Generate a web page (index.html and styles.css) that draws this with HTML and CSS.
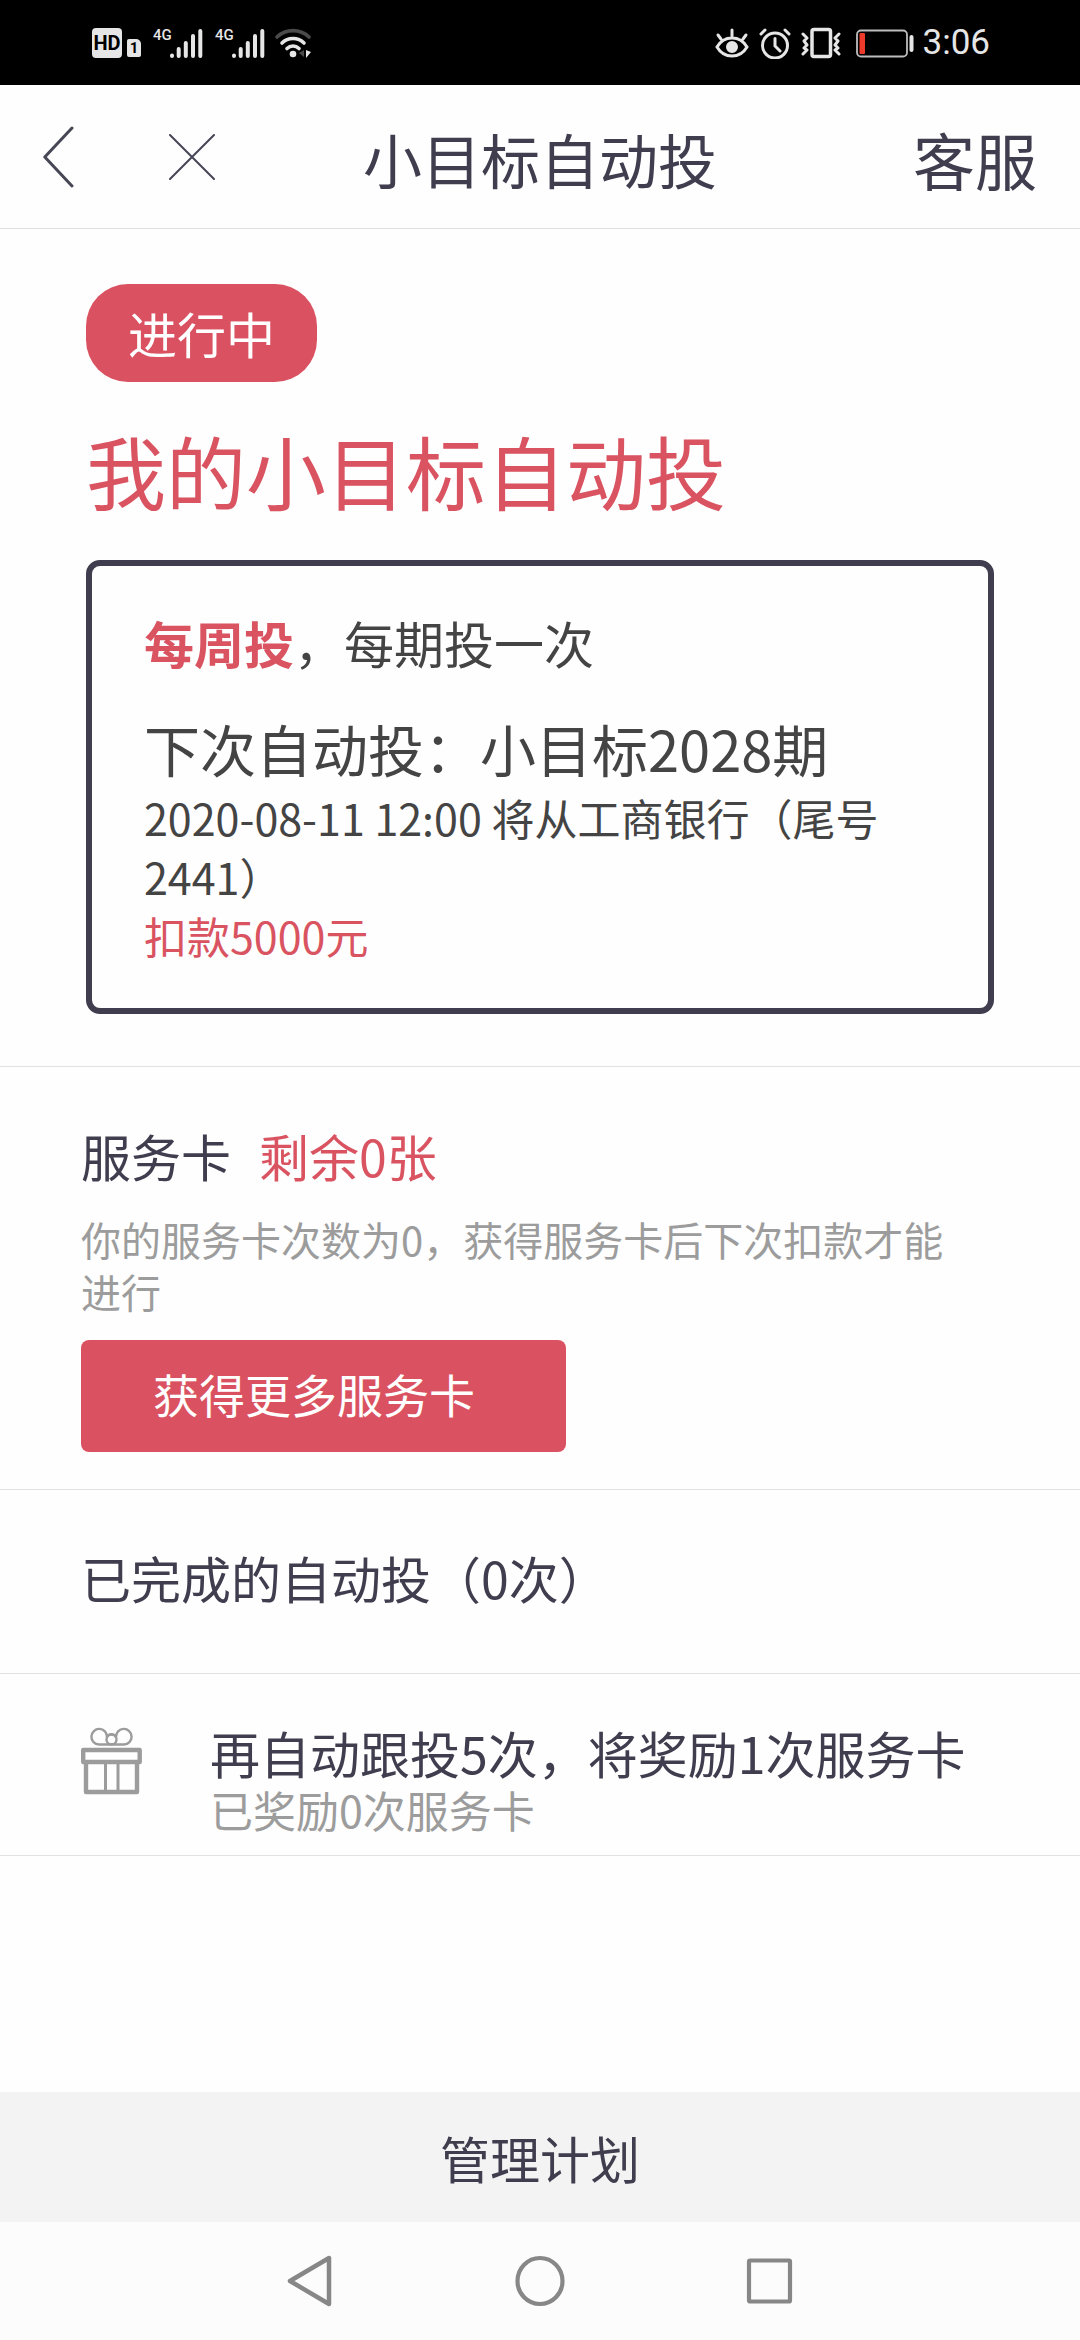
FILE: index.html
```html
<!DOCTYPE html>
<html lang="zh-CN">
<head>
<meta charset="utf-8">
<meta name="viewport" content="width=device-width, initial-scale=1">
<title>小目标自动投</title>
<link rel="stylesheet" href="styles.css">
</head>
<body>
<div class="page">
  <div class="status">
    <div class="status-group">
      <span class="hd">HD</span>
      <span class="sim">1</span>
      <span class="network">4G</span>
      <svg class="bars" width="34" height="32" viewBox="0 0 34 32" stroke="#e6e6e6" stroke-width="4" stroke-linecap="round"><path d="M3 28.500v.5M9.700 22v7M16.800 16v13M24 9v20M31.300 4v25"/></svg>
      <span class="network">4G</span>
      <svg class="bars" width="34" height="32" viewBox="0 0 34 32" stroke="#e6e6e6" stroke-width="4" stroke-linecap="round"><path d="M3 28.500v.5M9.700 22v7M16.800 16v13M24 9v20M31.300 4v25"/></svg>
      <svg class="wifi" width="38" height="32" viewBox="0 0 38 32" fill="none" stroke-width="3.600" stroke-linecap="round"><path d="M2 10C11 1.500 25 1.500 34 10" stroke="#4a4a4a"/><path d="M7 16C13 10 23 10 29 16M12 21.500C15.500 18.200 20.500 18.200 24 21.500" stroke="#e6e6e6"/><circle cx="18" cy="27" r="3.300" fill="#e6e6e6"/><path d="M29 23v7l-5-4z" fill="#4a4a4a"/><path d="M31 23v8l5-6z" fill="#e6e6e6"/></svg>
    </div>
    <div class="status-group">
      <svg class="eye" width="34" height="32" viewBox="0 0 34 32" fill="none" stroke="#e6e6e6" stroke-width="3" stroke-linecap="round"><path d="M2 20C9 8 25 8 32 20 25 32 9 32 2 20zM17 3v6M3 8l3 4M31 8l-3 4"/><circle cx="17" cy="20" r="5" fill="#e6e6e6" stroke-width="2"/></svg>
      <svg class="clock" width="32" height="32" viewBox="0 0 32 32" fill="none" stroke="#e6e6e6" stroke-width="3" stroke-linecap="round"><circle cx="16" cy="18.500" r="12.500"/><path d="M16 11.500v7.500l5 5M2 7l4-4M30 7l-4-4"/></svg>
      <svg class="vibrate" width="40" height="32" viewBox="0 0 40 32" fill="none" stroke="#e6e6e6" stroke-width="3" stroke-linejoin="round" stroke-linecap="round"><rect x="11" y="2.500" width="18.500" height="27" rx="2" stroke-width="3.500"/><path d="M2 7l4 4-3 3 3 4-3 3 3 2-4 4M38 7l-4 4 3 3-3 4 3 3-3 2 4 4"/></svg>
      <svg class="battery" width="58" height="32" viewBox="0 0 58 32" fill="none"><rect x="1" y="3.500" width="50" height="26" rx="4" stroke="#bdbdbd" stroke-width="1.800"/><rect x="3.500" y="6" width="5.500" height="21" rx="1" fill="#ee3a2b"/><rect x="53.500" y="8" width="4" height="17" rx="2" fill="#e6e6e6"/></svg>
      <time class="time">3:06</time>
    </div>
  </div>

  <header class="header">
    <div class="header-left">
      <button class="icon-button" type="button" aria-label="返回"><svg width="32" height="64" viewBox="0 0 32 64" fill="none" stroke="#464654" stroke-width="3" stroke-linecap="round" stroke-linejoin="round"><path d="M29 3L1.800 32 29 61"/></svg></button>
      <button class="icon-button" type="button" aria-label="关闭"><svg width="46" height="46" viewBox="0 0 46 46" stroke="#464654" stroke-width="2" stroke-linecap="round"><path d="M1 1l44 44M45 1L1 45"/></svg></button>
    </div>
    <h1 class="header-title">小目标自动投</h1>
    <a class="header-link" href="#service">客服</a>
  </header>

  <main class="content">
    <section class="plan">
      <span class="badge">进行中</span>
      <h2 class="plan-title">我的小目标自动投</h2>
      <div class="card">
        <p class="cycle"><strong>每周投</strong>，每期投一次</p>
        <h3 class="next">下次自动投：小目标2028期</h3>
        <p class="detail">2020-08-11 12:00 将从工商银行（尾号2441）</p>
        <p class="detail accent">扣款5000元</p>
      </div>
    </section>

    <section class="service" id="service">
      <h3 class="row-title service-title">服务卡<span class="accent">剩余0张</span></h3>
      <p class="hint">你的服务卡次数为0，获得服务卡后下次扣款才能进行</p>
      <button class="more" type="button">获得更多服务卡</button>
    </section>

    <section class="done">
      <h3 class="row-title">已完成的自动投（0次）</h3>
    </section>

    <section class="reward">
      <svg class="gift" width="62" height="70" viewBox="0 0 62 70" fill="none" stroke="#9c9c9c"><path d="M18 18.500a7.800 7.800 0 1 1 8-7.500a5 5 0 0 1 9 0a7.800 7.800 0 1 1 8 7.500z" stroke-width="2.400"/><circle cx="30.500" cy="13.500" r="5" stroke-width="2.400"/><rect x="2.200" y="24" width="56.500" height="12" stroke-width="4.400" stroke-linejoin="round"/><path d="M5 37v29h51V37" stroke-width="4.400" stroke-linejoin="round"/><path d="M24.500 37v29M37 37v29" stroke-width="3"/></svg>
      <div>
        <h3 class="row-title">再自动跟投5次，将奖励1次服务卡</h3>
        <p class="reward-note">已奖励0次服务卡</p>
      </div>
    </section>
  </main>

  <button class="manage" type="button">管理计划</button>

  <nav class="nav" aria-label="系统导航">
    <button class="icon-button" type="button" aria-label="后退"><svg width="50" height="54" viewBox="0 0 50 54" fill="none" stroke="#878787" stroke-width="4.500" stroke-linejoin="round"><path d="M43 4v46L4 27z"/></svg></button>
    <button class="icon-button" type="button" aria-label="主页"><svg width="50" height="54" viewBox="0 0 50 54" fill="none" stroke="#878787" stroke-width="4.200"><ellipse cx="25" cy="27" rx="22.500" ry="23"/></svg></button>
    <button class="icon-button" type="button" aria-label="最近任务"><svg width="50" height="54" viewBox="0 0 50 54" fill="none" stroke="#878787" stroke-width="4.200" stroke-linejoin="round"><rect x="5" y="6.500" width="41" height="41" rx="1"/></svg></button>
  </nav>
</div>
</body>
</html>
```
FILE: styles.css
```css
* {
  box-sizing: border-box;
}

body,
h1,
h2,
h3,
p {
  margin: 0;
  font-weight: 400;
}

body {
  background: #fefefe;
  color: #3f3d4e;
  font-family: "Noto Sans CJK SC", sans-serif;
}

button {
  border: 0;
  font-family: inherit;
  cursor: pointer;
}

svg {
  display: block;
}

.page {
  display: flex;
  flex-direction: column;
  min-height: 100vh;
}

.status {
  display: flex;
  align-items: center;
  justify-content: space-between;
  height: 85px;
  padding: 0 90px 0 92px;
  background: #000;
  color: #e6e6e6;
  font-family: Roboto, sans-serif;
}

.status-group {
  display: flex;
  align-items: center;
}

.hd {
  width: 30px;
  border-radius: 4px;
  background: #e6e6e6;
  color: #000;
  font-size: 20px;
  font-weight: 700;
  line-height: 30px;
  text-align: center;
}

.sim {
  align-self: flex-end;
  width: 14px;
  margin: 0 0 2px 5px;
  border-radius: 2px 5px 2px 2px;
  background: #e6e6e6;
  color: #000;
  font-size: 15px;
  font-weight: 700;
  line-height: 18px;
  text-align: center;
}

.network {
  align-self: flex-start;
  width: 16px;
  margin-left: 12px;
  font-size: 15px;
  font-weight: 500;
  line-height: 16px;
}

.wifi {
  margin-left: 10px;
}

.clock {
  margin-left: 10px;
}

.vibrate {
  margin-left: 10px;
}

.battery {
  margin-left: 15px;
}

.time {
  margin-left: 9px;
  font-size: 35px;
  line-height: 40px;
}

.header {
  display: grid;
  grid-template-columns: 1fr auto 1fr;
  align-items: center;
  height: 144px;
  padding: 0 43px;
  border-bottom: 1px solid #dedede;
}

.header-left {
  display: flex;
  align-items: center;
  gap: 94px;
}

.icon-button {
  padding: 0;
  background: none;
}

.header-title {
  padding-top: 4px;
  font-size: 59px;
  line-height: 72px;
}

.header-link {
  justify-self: end;
  padding-top: 4px;
  color: inherit;
  font-size: 62px;
  line-height: 72px;
  text-decoration: none;
}

.content {
  flex: 1;
}

.content > section {
  border-bottom: 1px solid #e2e2e2;
}

.accent {
  color: #d95361;
}

.plan {
  padding: 55px 86px 52px;
}

.badge {
  display: inline-block;
  padding: 0 42px;
  border-radius: 42px;
  background: #da5261;
  color: #fff;
  font-size: 49px;
  line-height: 98px;
  vertical-align: top;
}

.plan-title {
  margin: 30px 0 34px;
  color: #d95361;
  font-size: 80px;
  line-height: 114px;
}

.card {
  padding: 40px 52px 43px;
  border: 6px solid #3f3d4e;
  border-radius: 14px;
  color: #444;
}

.cycle {
  font-size: 50px;
  line-height: 72px;
}

.cycle strong {
  color: #d95361;
  font-weight: 700;
}

.next {
  margin-top: 30px;
  font-size: 56px;
  line-height: 80px;
}

.detail {
  font-size: 43px;
  line-height: 59px;
}

.service {
  padding: 52px 81px 37px;
}

.row-title {
  font-size: 50px;
  line-height: 72px;
}

.service-title {
  display: flex;
  gap: 28px;
}

.hint {
  max-width: 880px;
  margin: 22px 0 23px;
  color: #9c9c9c;
  font-size: 40px;
  line-height: 52px;
}

.more {
  display: block;
  width: 485px;
  padding: 0 72px 6px;
  border-radius: 8px;
  background: #da5261;
  color: #fff;
  font-size: 46px;
  line-height: 106px;
  text-align: left;
}

.done {
  padding: 51px 81px 60px;
}

.reward {
  display: flex;
  gap: 67px;
  padding: 42px 81px 24px;
}

.gift {
  flex: none;
  margin-top: 10px;
}

.reward-note {
  color: #9c9c9c;
  font-size: 43px;
  line-height: 43px;
}

.manage {
  background: #f3f3f3;
  color: #3f3d4e;
  font-size: 50px;
  line-height: 72px;
  padding: 29px 0;
}

.nav {
  display: flex;
  justify-content: center;
  align-items: center;
  gap: 179px;
  height: 118px;
  background: #fcfcfc;
}
```
